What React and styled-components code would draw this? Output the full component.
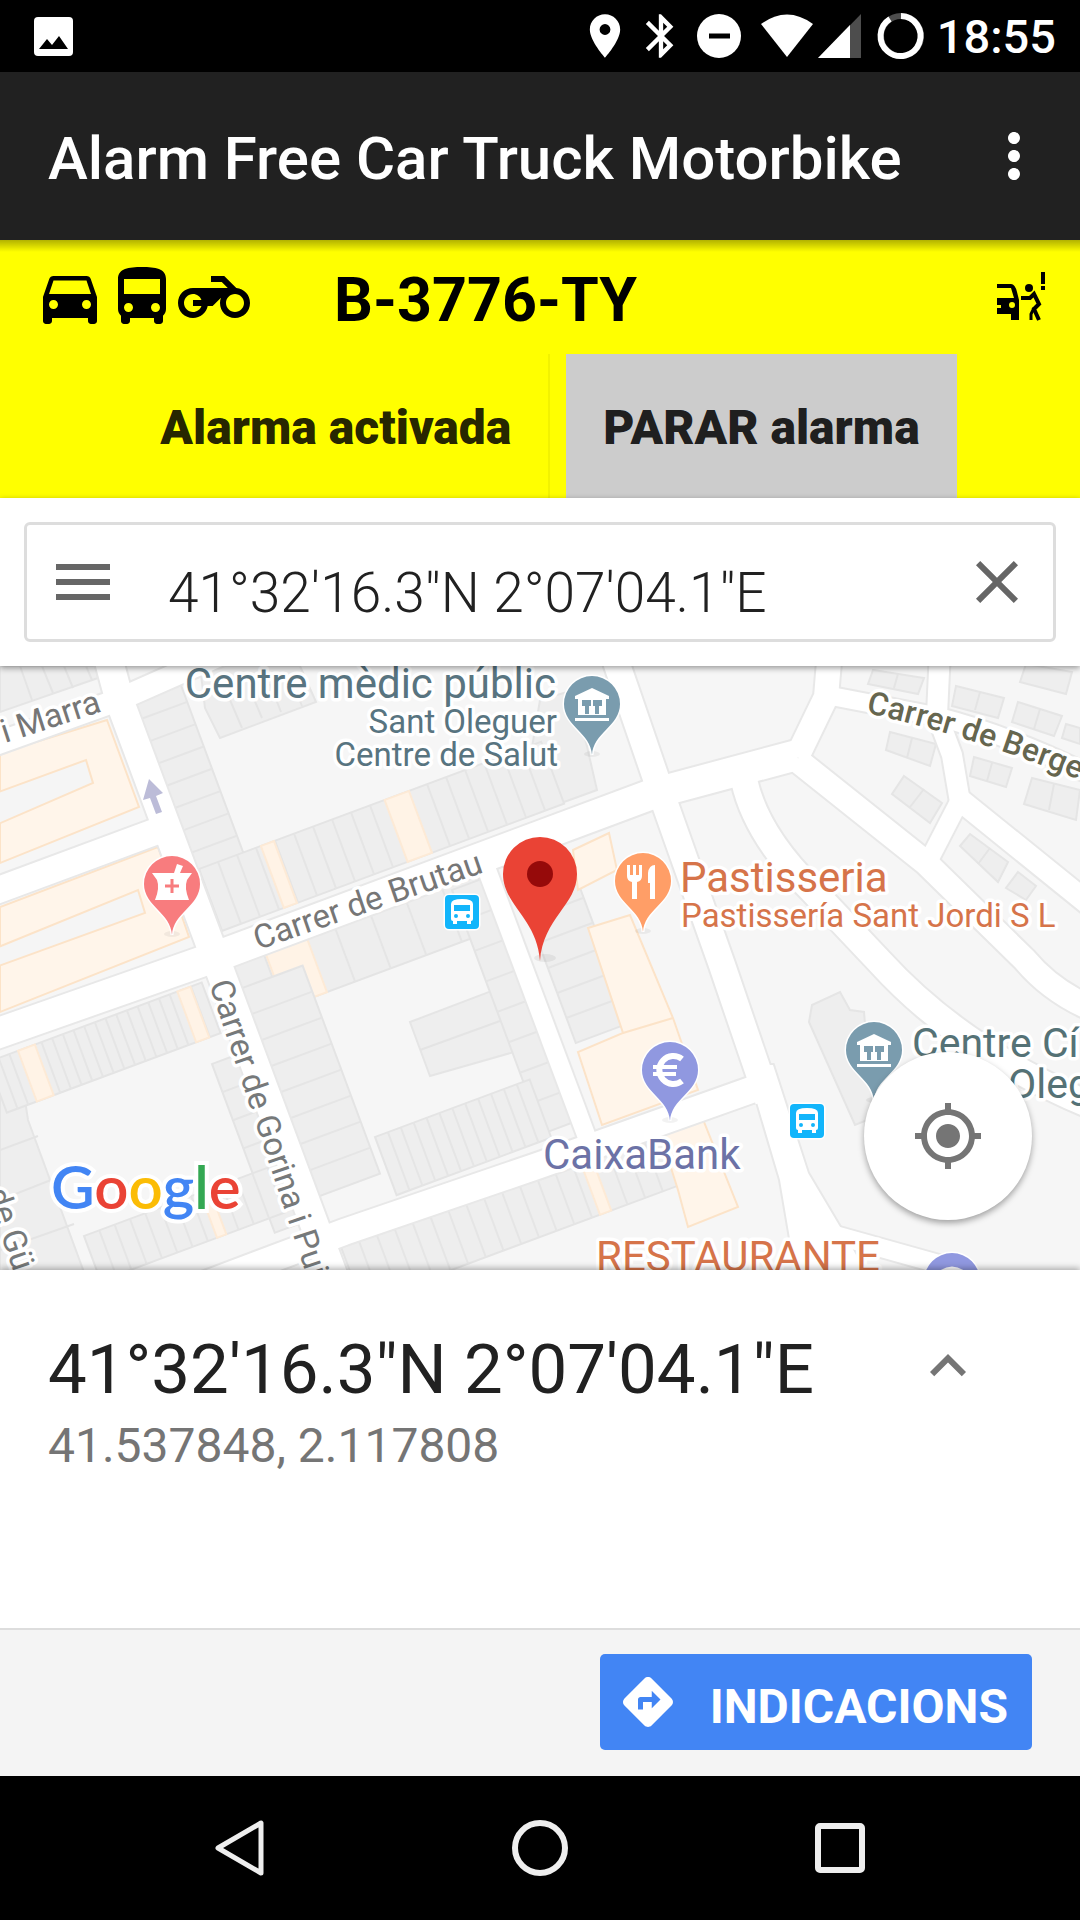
import React, { useState } from 'react';
import styled, { createGlobalStyle } from 'styled-components';
import {
  MdBluetooth,
  MdClose,
  MdDirections,
  MdDirectionsBus,
  MdDirectionsCar,
  MdExpandLess,
  MdMoreVert,
  MdMyLocation,
  MdPlace,
} from 'react-icons/md';

const GlobalStyle = createGlobalStyle`
  * {
    box-sizing: border-box;
  }

  body {
    margin: 0;
    font-family: Roboto, "Liberation Sans", sans-serif;
    background: #ffffff;
  }

  button {
    margin: 0;
    padding: 0;
    border: 0;
    background: none;
    font-family: inherit;
    cursor: pointer;
  }

  svg {
    display: block;
    flex: none;
  }
`;

const Screen = styled.div`
  display: flex;
  flex-direction: column;
  min-height: 100vh;
`;

const StatusBar = styled.div`
  display: flex;
  align-items: center;
  justify-content: space-between;
  height: 72px;
  padding: 0 24px 0 34px;
  background: #000000;
  color: #ffffff;
`;

const StatusIcons = styled.div`
  display: flex;
  align-items: center;
  gap: 4px;
`;

const Clock = styled.time`
  padding-top: 2px;
  font-size: 47px;
  line-height: 56px;
  font-weight: 500;
`;

const AppBar = styled.header`
  display: flex;
  align-items: center;
  justify-content: space-between;
  height: 168px;
  padding: 0 30px 0 48px;
  background: #212121;
  color: #ffffff;

  h1 {
    margin: 0;
    padding-top: 6px;
    font-size: 60px;
    line-height: 72px;
    font-weight: 500;
    white-space: nowrap;
  }
`;

const IconButton = styled.button`
  display: flex;
  align-items: center;
  justify-content: center;
  width: 72px;
  height: 72px;
  color: ${(props) => props.$color || 'inherit'};
`;

const AlarmPanel = styled.section`
  background: linear-gradient(rgba(0, 0, 0, 0.3), rgba(0, 0, 0, 0) 12px) #ffff00;
`;

const VehicleRow = styled.div`
  display: flex;
  align-items: center;
  height: 114px;
  padding: 0 33px 0 34px;
`;

const Vehicles = styled.div`
  display: flex;
`;

const Plate = styled.h2`
  flex: 1;
  margin: 0;
  padding: 6px 0 0 84px;
  font-size: 61px;
  line-height: 72px;
  font-weight: 700;
`;

const Tabs = styled.div`
  display: flex;
  justify-content: center;
  gap: 16px;
`;

const TabButton = styled.button`
  height: 144px;
  padding: 4px 37px 0;
  background: ${(props) => (props.$active ? '#cccccc' : 'transparent')};
  border-right: ${(props) => (props.$active ? '0' : '2px solid #f2f200')};
  color: rgba(0, 0, 0, 0.87);
  font-size: 48px;
  line-height: 56px;
  font-weight: 900;
`;

const SearchArea = styled.div`
  position: relative;
  z-index: 1;
  padding: 24px;
  background: #ffffff;
  box-shadow: 0 2px 6px rgba(0, 0, 0, 0.4);
`;

const SearchBox = styled.div`
  display: flex;
  align-items: center;
  height: 120px;
  padding: 0 20px;
  border: 3px solid #dddddd;
  border-radius: 6px;
`;

const SearchInput = styled.input`
  flex: 1;
  min-width: 0;
  margin: 0;
  padding: 22px 0 0 49px;
  border: 0;
  outline: 0;
  background: none;
  color: #212121;
  font-family: inherit;
  font-size: 55px;
  line-height: 64px;
  font-weight: 300;
`;

const MapArea = styled.div`
  position: relative;
  flex: 1;
  min-height: 400px;
  overflow: hidden;
  background: #f6f6f6;

  > svg {
    position: absolute;
    width: 100%;
    height: 100%;
  }
`;

const GoogleMark = styled.span`
  position: absolute;
  left: 51px;
  bottom: 48px;
  font-family: Lato, Roboto, sans-serif;
  font-size: 60px;
  line-height: 72px;
  font-weight: 600;
  -webkit-text-stroke: 8px #ffffff;
  paint-order: stroke fill;
`;

const Letter = styled.span`
  color: ${(props) => props.$color};
`;

const LocateButton = styled.button`
  position: absolute;
  right: 48px;
  bottom: 50px;
  display: flex;
  align-items: center;
  justify-content: center;
  width: 168px;
  height: 168px;
  border-radius: 50%;
  background: #ffffff;
  box-shadow: 0 3px 6px rgba(0, 0, 0, 0.35);
  color: #757575;
`;

const PlaceCard = styled.section`
  position: relative;
  display: flex;
  justify-content: space-between;
  height: 358px;
  padding: 60px 96px 0 48px;
  background: #ffffff;
  box-shadow: 0 -2px 6px rgba(0, 0, 0, 0.3);
`;

const PlaceTitle = styled.h2`
  margin: 0;
  color: #212121;
  font-size: 69px;
  line-height: 80px;
  font-weight: 400;
`;

const PlaceCoords = styled.p`
  margin: 8px 0 0;
  color: #757575;
  font-size: 48px;
  line-height: 56px;
`;

const Footer = styled.footer`
  position: relative;
  display: flex;
  justify-content: flex-end;
  padding: 24px 48px 26px;
  border-top: 2px solid #dddddd;
  background: #f4f4f4;
`;

const DirectionsLink = styled.a`
  display: flex;
  align-items: center;
  gap: 32px;
  height: 96px;
  padding: 0 24px 0 18px;
  border-radius: 5px;
  background: #4285f4;
  color: #ffffff;
  font-size: 48px;
  line-height: 56px;
  font-weight: 700;
  text-decoration: none;

  span {
    padding-top: 10px;
  }
`;

const NavBar = styled.nav`
  display: flex;
  height: 144px;
  padding: 0 90px;
  background: #000000;
`;

const NavButton = styled.button`
  display: flex;
  flex: 1;
  align-items: center;
  justify-content: center;
`;

const COORDS = `41°32'16.3"N 2°07'04.1"E`;

const POI_COLORS = {
  civic: '#7a9cae',
  food: '#ff9e67',
  bank: '#9098e0',
  pharmacy: '#f87c7e',
};

// Streets, drawn twice: grey edge first and white surface over it
const STREETS = [
  { d: 'M-10 1036 L215 957 L655 793 L797 755', w: 30 },
  { d: 'M-10 893 L160 830', w: 26 },
  { d: 'M106 650 L120 702 L216 960 L335 1280', w: 28 },
  { d: 'M-10 746 L118 700 L220 655', w: 22 },
  { d: 'M484 862 L588 1140', w: 18 },
  { d: 'M612 650 L660 790 L722 965 L768 1100', w: 26 },
  { d: 'M190 1290 L344 1232 L540 1165 L765 1085', w: 26 },
  { d: 'M797 757 L826 697 L830 650', w: 24 },
  { d: 'M826 695 L935 716 Q1010 735 1090 775', w: 18 },
  { d: 'M940 650 L937 715 L952 755 L960 802', w: 20 },
  { d: 'M960 800 L928 862', w: 18 },
  { d: 'M960 800 L1090 905', w: 22 },
  { d: 'M797 760 L925 862 L1025 960 Q1050 990 1090 1008', w: 24 },
  { d: 'M744 780 Q756 835 812 890 L880 962 Q960 1050 1090 1105', w: 26 },
  { d: 'M835 1235 L960 1270', w: 18 },
];

// the street that widens into the junction at the bottom
const JUNCTION = 'M746 1065 L780 1180 L797 1280 H870 L846 1237 L808 1173 L773 1065 Z';

const BUILDINGS = [
  '0,666 96,666 98,678 0,712',
  '200,666 300,666 316,702 220,738 205,708',
  '540,700 574,690 597,790 520,818',
  '0,1062 18,1054 28,1120 85,1275 0,1275',
  '410,1022 510,984 535,1046 430,1076',
  '809,1022 812,1005 840,992 850,1010 864,1012 868,1060 892,1110 855,1125',
  '873,670 924,678 918,694 868,684',
  '956,686 1004,698 998,718 952,706',
  '1018,702 1062,716 1054,736 1012,722',
  '890,732 936,744 930,766 886,750',
  '904,776 942,803 930,823 892,794',
  '974,757 1012,768 1006,787 970,776',
  '1032,778 1080,790 1076,820 1024,804',
  '970,834 1008,862 998,882 960,846',
  '1018,872 1036,886 1026,900 1006,888',
  '1026,664 1072,672 1066,694 1020,682',
  '1066,724 1080,728 1080,744 1062,738',
];

const SHOPS = [
  '0,753 107,720 139,807 0,863',
  '0,907 158,847 189,937 0,1012',
  '573,850 609,833 617,870 578,890',
  '588,928 630,915 673,1018 698,1090 602,1125 578,1052 623,1033',
  '659,1130 702,1117 738,1207 688,1227 678,1190',
];

// Row of houses parallel (across) or square (down) to the main street
const Terrace = ({ x, y, w, h, n, down, shops = [] }) => {
  const lines = [];
  for (let i = 1; i < n; i += 1) {
    lines.push(down ? `M0 ${(h * i) / n} H${w}` : `M${(w * i) / n} 0 V${h}`);
  }
  return (
    <g transform={`translate(${x} ${y}) rotate(-20.4)`}>
      <rect width={w} height={h} fill="#eeeeee" stroke="#e4e4e4" strokeWidth="2" />
      <path d={lines.join(' ')} stroke="#e5e5e5" strokeWidth="2" />
      {shops.map(([left, width]) => (
        <rect key={left} x={left} width={width} height={h} fill="#fff3e6" stroke="#fdead6" strokeWidth="2" />
      ))}
    </g>
  );
};

const Pin = ({ x, y, kind, children }) => (
  <g transform={`translate(${x} ${y})`}>
    <ellipse cy="50" rx="8" ry="3" fill="#000000" opacity="0.05" />
    <path
      d="M0 51 C-1 29 -28 22 -28 0 A28 28 0 0 1 28 0 C28 22 1 29 0 51 Z"
      fill={POI_COLORS[kind]}
      stroke="#ffffff"
      strokeWidth="3"
      paintOrder="stroke"
    />
    {children}
  </g>
);

const Temple = () => (
  <path
    fill="#ffffff"
    fillRule="evenodd"
    d="M0 -16 L17 -8 V-5 H14 V11 H-14 V-5 H-17 V-8 Z M-10 -4 V2 H-7 V10 H-3 V2 H-1 V-4 Z M1 -4 V2 H3 V10 H7 V2 H10 V-4 Z M-17 14 H17 V17 H-17 Z"
  />
);

const BusStop = ({ x, y }) => (
  <g transform={`translate(${x} ${y})`}>
    <rect width="34" height="34" rx="4" fill="#12b5fb" stroke="#ffffff" strokeWidth="3" paintOrder="stroke" />
    <path
      fill="#ffffff"
      fillRule="evenodd"
      d="M6 9 Q6 4 17 4 Q28 4 28 9 V24 Q28 26 26 26 V29 H22 V26 H12 V29 H8 V26 Q6 26 6 24 Z M9 10 V16 H25 V10 Z M9 21 a2 2 0 1 0 4 0 a2 2 0 1 0 -4 0 M21 21 a2 2 0 1 0 4 0 a2 2 0 1 0 -4 0"
    />
  </g>
);

const MapLabel = styled.text`
  fill: ${(props) => props.$color};
  font-size: ${(props) => props.$size || 33}px;
  font-weight: ${(props) => props.$weight || 400};
  text-anchor: ${(props) => props.$anchor || 'start'};
  stroke: #ffffff;
  stroke-width: 7px;
  stroke-linejoin: round;
  paint-order: stroke;
`;

const StreetMap = () => (
  <svg viewBox="0 666 1080 604" preserveAspectRatio="xMidYMid slice" fill="none">
    <g fill="#eeeeee" stroke="#e5e5e5" strokeWidth="2">
      {BUILDINGS.map((points) => (
        <polygon key={points} points={points} />
      ))}
    </g>
    <path
      stroke="#e4e4e4"
      strokeWidth="2"
      d="M20 666 l12 34 M42 666 l11 27 M64 666 l9 22 M86 666 l6 14 M230 700 l12 28 M250 690 l12 28 M270 684 l11 28 M290 676 l12 30 M0 1150 l38 -14 M0 1200 l56 -22 M0 1250 l74 -26 M420 1050 l105 -38 M898 674 l-4 14 M980 692 l-5 18 M1040 709 l-6 20 M912 738 l-5 20 M924 789 l-14 18 M992 763 l-5 18 M1054 784 l-5 26 M990 848 l-12 16"
    />
    <Terrace x={132} y={697} w={50} h={238} n={10} down />
    <Terrace x={199} y={869} w={365} h={66} n={18} shops={[[66, 14], [198, 26]]} />
    <Terrace x={228} y={967} w={266} h={58} n={7} shops={[[40, 44]]} />
    <Terrace x={452} y={890} w={36} h={260} n={8} down />
    <Terrace x={375} y={1137} w={165} h={62} n={12} />
    <Terrace x={237} y={990} w={70} h={222} n={8} down />
    <Terrace x={-12} y={1062} w={228} h={54} n={20} shops={[[32, 18], [202, 14]]} />
    <Terrace x={212} y={1064} w={34} h={180} n={6} down />
    <Terrace x={84} y={1236} w={196} h={48} n={12} shops={[[124, 10]]} />
    <Terrace x={341} y={1247} w={340} h={60} n={18} shops={[[254, 12]]} />
    <Terrace x={520} y={893} w={58} h={160} n={6} down />
    <g fill="#fff5ea" stroke="#fce3c8" strokeWidth="2">
      {SHOPS.map((points) => (
        <polygon key={points} points={points} />
      ))}
      <path d="M623 1033 L673 1018" />
    </g>
    <g fill="#f5f5f5" stroke="#fce3c8" strokeWidth="2">
      <polygon points="-4,793 86,760 93,783 -4,825" />
      <polygon points="-4,948 138,890 145,913 -4,967" />
    </g>

    {STREETS.map((street) => (
      <path key={street.d} d={street.d} stroke="#e8e8e8" strokeWidth={street.w + 4} />
    ))}
    <path d={JUNCTION} stroke="#e8e8e8" strokeWidth="4" />
    {STREETS.map((street) => (
      <path key={street.d} d={street.d} stroke="#ffffff" strokeWidth={street.w} />
    ))}
    <path d={JUNCTION} fill="#ffffff" />

    <path d="M149 779 L163 793 L156 796 L162 812 L156 814 L150 798 L143 800 Z" fill="#bcbcd8" />

    <MapLabel $color="#767676" transform="translate(5 743) rotate(-18)">i Marra</MapLabel>
    <MapLabel $color="#767676" transform="translate(258 950) rotate(-19)">Carrer de Brutau</MapLabel>
    <MapLabel $color="#76797a" transform="translate(209 984) rotate(71.5)">Carrer de Gorina i Puig</MapLabel>
    <MapLabel $color="#76797a" transform="translate(-14 1192) rotate(71)">de Gü</MapLabel>
    <path id="berge" d="M866 713 Q970 735 1100 788" />
    <MapLabel $color="#66664f" $size={32} $weight={500}>
      <textPath href="#berge">Carrer de Berge</textPath>
    </MapLabel>

    <MapLabel $color="#587480" $size={42} $anchor="end" x="556" y="698">Centre mèdic públic</MapLabel>
    <MapLabel $color="#587480" $anchor="end" x="557" y="733">Sant Oleguer</MapLabel>
    <MapLabel $color="#587480" $anchor="end" x="558" y="766">Centre de Salut</MapLabel>
    <MapLabel $color="#d6744a" $size={42} x="680" y="892">Pastisseria</MapLabel>
    <MapLabel $color="#d6744a" x="681" y="927">Pastissería Sant Jordi S L</MapLabel>
    <MapLabel $color="#6c72a6" $size={42} x="543" y="1169">CaixaBank</MapLabel>
    <MapLabel $color="#d6744a" $size={42} x="596" y="1271">RESTAURANTE</MapLabel>
    <MapLabel $color="#557276" $size={41} x="912" y="1057">Centre Cí</MapLabel>
    <MapLabel $color="#557276" $size={41} x="1008" y="1098">Oleg</MapLabel>

    <BusStop x={445} y={895} />
    <BusStop x={790} y={1104} />

    <Pin x={592} y={704} kind="civic"><Temple /></Pin>
    <Pin x={874} y={1050} kind="civic"><Temple /></Pin>
    <Pin x={172} y={884} kind="pharmacy">
      <path fill="#ffffff" d="M-20 -11 H2 L5 -20 L11 -18 L8 -11 H20 L15 -4 Q12 4 17 16 H-17 Q-12 4 -15 -4 Z" />
      <path stroke="#f87c7e" strokeWidth="3" d="M0 -5 V9 M-7 2 H7" />
    </Pin>
    <Pin x={643} y={881} kind="food">
      <path
        fill="#ffffff"
        d="M-16 -16 H-13 V-6 H-10 V-16 H-7 V-6 H-4 V-16 H-1 V-5 Q-1 0 -6 1 V18 H-11 V1 Q-16 0 -16 -5 Z M5 -8 Q6 -16 12 -16 V18 H7 V2 H5 Z"
      />
    </Pin>
    <Pin x={670} y={1070} kind="bank">
      <path stroke="#ffffff" strokeWidth="6" d="M12 -11 A14 14 0 1 0 12 11" />
      <path stroke="#ffffff" strokeWidth="4" d="M-17 -3 H7 M-17 4 H6" />
    </Pin>
    <Pin x={952} y={1281} kind="bank">
      <path stroke="#ffffff" strokeWidth="6" d="M-13 -6 Q0 -17 13 -6" />
    </Pin>

    <ellipse cx="545" cy="958" rx="11" ry="4" fill="#000000" opacity="0.06" />
    <path
      d="M540 961 C537 918 503 905 503 874 A37 37 0 0 1 577 874 C577 905 543 918 540 961 Z"
      fill="#ea4335"
    />
    <circle cx="540" cy="874" r="13" fill="#960a0a" />
  </svg>
);

const MotorbikeIcon = () => (
  <svg width="72" height="72" viewBox="0 0 24 24" fill="currentColor">
    <path d="M19.44 9.03L15.41 5H11v2h3.59l2 2H5c-2.8 0-5 2.2-5 5s2.2 5 5 5c2.46 0 4.45-1.69 4.9-4h1.65l2.77-2.77c-.21.54-.32 1.14-.32 1.77 0 2.8 2.2 5 5 5s5-2.2 5-5c0-2.65-1.97-4.77-4.56-4.97zM7.82 15C7.4 16.15 6.28 17 5 17c-1.63 0-3-1.37-3-3s1.37-3 3-3c1.28 0 2.4.85 2.82 2H5v2h2.82zM19 17c-1.66 0-3-1.34-3-3s1.34-3 3-3 3 1.34 3 3-1.34 3-3 3z" />
  </svg>
);

const PictureIcon = () => (
  <svg width="39" height="39" viewBox="0 0 39 39">
    <rect width="39" height="39" rx="4" fill="#ffffff" />
    <path d="M5 32 L13 22 L18 28 L25 19 L34 32 Z" fill="#000000" />
  </svg>
);

const DisturbIcon = () => (
  <svg width="52" height="52" viewBox="0 0 52 52">
    <circle cx="28" cy="26" r="22" fill="#ffffff" />
    <path d="M18 26 H39" stroke="#000000" strokeWidth="5" />
  </svg>
);

const WifiIcon = () => (
  <svg width="66" height="52" viewBox="0 0 66 52">
    <path d="M14 14 Q40 -5 66 14 L40 47 Z" fill="#ffffff" />
  </svg>
);

const SignalIcon = () => (
  <svg width="48" height="52" viewBox="0 0 48 52">
    <path d="M44 4 V48 H1 Z" fill="#4d4d4d" />
    <path d="M33 15 V48 H1 Z" fill="#ffffff" />
  </svg>
);

const BatteryIcon = () => (
  <svg width="64" height="52" viewBox="0 0 64 52" fill="none" strokeWidth="6">
    <circle cx="32" cy="26" r="20" stroke="#4d4d4d" />
    <path d="M32 6 A20 20 0 1 1 21 9" stroke="#ffffff" />
  </svg>
);

const ThiefIcon = () => (
  <svg width="50" height="50" viewBox="0 0 50 50" fill="#000000">
    <path
      fillRule="evenodd"
      d="M0 12 H14 Q18 12 20 20 L22 28 V48 H14 V42 H0 V36 H4 V33 H0 V26 H17 L14 16 H0 Z M12 33 a3 3 0 1 0 6 0 a3 3 0 1 0 -6 0"
    />
    <circle cx="32" cy="16" r="4" />
    <path d="M24 26 H33 L37 22 L42 32 L37 37 L42 48" fill="none" stroke="#000000" strokeWidth="4" />
    <path d="M37 36 L34 42 V48" fill="none" stroke="#000000" strokeWidth="3" />
    <path d="M44 0 H48 V12 H44 Z M44 14 H48 V18 H44 Z" />
  </svg>
);

const App = () => {
  const [query, setQuery] = useState(COORDS);
  const [stopped, setStopped] = useState(true);

  return (
    <Screen>
      <GlobalStyle />
      <StatusBar>
        <PictureIcon />
        <StatusIcons>
          <MdPlace size={52} />
          <MdBluetooth size={52} />
          <DisturbIcon />
          <WifiIcon />
          <SignalIcon />
          <BatteryIcon />
          <Clock>18:55</Clock>
        </StatusIcons>
      </StatusBar>

      <AppBar>
        <h1>Alarm Free Car Truck Motorbike</h1>
        <IconButton aria-label="Menu">
          <MdMoreVert size={72} />
        </IconButton>
      </AppBar>

      <AlarmPanel>
        <VehicleRow>
          <Vehicles>
            <MdDirectionsCar size={72} />
            <MdDirectionsBus size={72} />
            <MotorbikeIcon />
          </Vehicles>
          <Plate>B-3776-TY</Plate>
          <ThiefIcon />
        </VehicleRow>
        <Tabs>
          <TabButton $active={!stopped} onClick={() => setStopped(false)}>Alarma activada</TabButton>
          <TabButton $active={stopped} onClick={() => setStopped(true)}>PARAR alarma</TabButton>
        </Tabs>
      </AlarmPanel>

      <SearchArea>
        <SearchBox>
          <IconButton $color="#666666" aria-label="Menu del mapa">
            <svg width="72" height="72" viewBox="0 0 72 72">
              <path d="M9 21 H63 M9 36 H63 M9 51 H63" stroke="currentColor" strokeWidth="6" />
            </svg>
          </IconButton>
          <SearchInput aria-label="Cerca" value={query} onChange={(e) => setQuery(e.target.value)} />
          <IconButton $color="#666666" aria-label="Esborra" onClick={() => setQuery('')}>
            <MdClose size={72} />
          </IconButton>
        </SearchBox>
      </SearchArea>

      <MapArea>
        <StreetMap />
        <GoogleMark>
          <Letter $color="#4285f4">G</Letter>
          <Letter $color="#ea4335">o</Letter>
          <Letter $color="#fbbc05">o</Letter>
          <Letter $color="#4285f4">g</Letter>
          <Letter $color="#34a853">l</Letter>
          <Letter $color="#ea4335">e</Letter>
        </GoogleMark>
        <LocateButton aria-label="La meva ubicació">
          <MdMyLocation size={72} />
        </LocateButton>
      </MapArea>

      <PlaceCard>
        <div>
          <PlaceTitle>{COORDS}</PlaceTitle>
          <PlaceCoords>41.537848, 2.117808</PlaceCoords>
        </div>
        <IconButton $color="#757575" aria-label="Mostra més">
          <MdExpandLess size={72} />
        </IconButton>
      </PlaceCard>

      <Footer>
        <DirectionsLink href="#indicacions">
          <MdDirections size={60} />
          <span>INDICACIONS</span>
        </DirectionsLink>
      </Footer>

      <NavBar>
        <NavButton aria-label="Enrere">
          <svg width="60" height="60" viewBox="0 0 60 60">
            <path d="M51 5 V55 L8 30 Z" fill="none" stroke="#eeeeee" strokeWidth="5" strokeLinejoin="round" />
          </svg>
        </NavButton>
        <NavButton aria-label="Inici">
          <svg width="60" height="60" viewBox="0 0 60 60">
            <circle cx="30" cy="30" r="25" fill="none" stroke="#eeeeee" strokeWidth="6" />
          </svg>
        </NavButton>
        <NavButton aria-label="Recents">
          <svg width="60" height="60" viewBox="0 0 60 60">
            <rect x="8" y="8" width="44" height="44" rx="2" fill="none" stroke="#eeeeee" strokeWidth="6" />
          </svg>
        </NavButton>
      </NavBar>
    </Screen>
  );
};

export default App;
